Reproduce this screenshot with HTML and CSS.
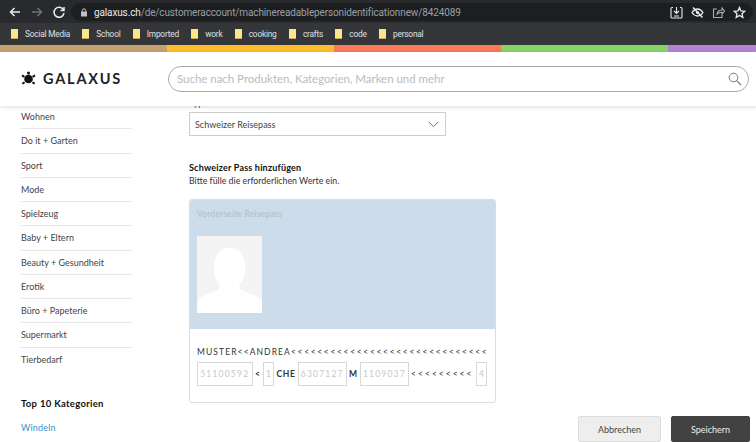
FILE: index.html
```html
<!DOCTYPE html>
<html lang="de">
<head>
    <meta charset="UTF-8">
    <title>Galaxus</title>
    <link rel="stylesheet" href="styles.css">
</head>
<body>
    <!-- Browser -->
    <div class="toolbar">
        <div class="navIcons">
            <svg width="14" height="14" viewBox="0 0 14 14"><path d="M12 7H2.500M6.500 3 2.500 7l4 4" class="nav"/></svg>
            <svg width="14" height="14" viewBox="0 0 14 14"><path d="M2 7h9.500M7.500 3l4 4-4 4" class="nav dim"/></svg>
            <svg width="14" height="14" viewBox="0 0 14 14"><path d="M11.500 5A5 5 0 1 0 12 8M12 2v3.500H8.500" class="nav"/></svg>
        </div>
        <div class="omnibox">
            <svg class="lock" width="8" height="9" viewBox="0 0 8 9"><rect x="1" y="3.500" width="6" height="5" fill="#bdc1c6"/><path d="M2.300 4V2.500a1.700 1.700 0 0 1 3.400 0V4" fill="none" stroke="#bdc1c6"/></svg>
            <span class="url"><b>galaxus.ch</b>/de/customeraccount/machinereadablepersonidentificationnew/8424089</span>
            <div class="omniIcons">
                <svg width="13" height="13" viewBox="0 0 13 13"><path d="M3 1.500H2a1 1 0 0 0-1 1V11a1 1 0 0 0 1 1h9a1 1 0 0 0 1-1V2.500a1 1 0 0 0-1-1h-1M6.500 1v6M4 5l2.500 2.500L9 5M4 10h5" fill="none" stroke="#e8eaed" stroke-width="1.100"/></svg>
                <svg width="13" height="13" viewBox="0 0 13 13"><path d="M1 6.500C3 3.500 5 3 6.500 3S10 3.500 12 6.500C10 9.500 8 10 6.500 10S3 9.500 1 6.500Z" fill="none" stroke="#e8eaed" stroke-width="1.300"/><circle cx="6.500" cy="6.500" r="1.600" fill="#e8eaed"/><path d="M2 1.500l9.500 10" stroke="#e8eaed" stroke-width="1.500"/></svg>
                <svg width="13" height="13" viewBox="0 0 13 13"><path d="M5 3H1.500v8.500H10V8M5 8c.5-2.500 2.500-4 5-4V2l2.500 3L10 8V6.300C8 6.300 6.300 6.700 5 8Z" fill="none" stroke="#a9adb1" stroke-width="1.100"/></svg>
                <svg width="13" height="13" viewBox="0 0 13 13"><path d="M6.500 1.500 8 5l3.700.3L9 7.700l.8 3.700-3.300-2-3.300 2 .8-3.700L1.300 5.300 5 5Z" fill="none" stroke="#e8eaed" stroke-width="1.300"/></svg>
            </div>
        </div>
    </div>
    <div class="bookmarks">
        <span class="bookmark">Social Media</span>
        <span class="bookmark">School</span>
        <span class="bookmark">Imported</span>
        <span class="bookmark">work</span>
        <span class="bookmark">cooking</span>
        <span class="bookmark">crafts</span>
        <span class="bookmark">code</span>
        <span class="bookmark">personal</span>
    </div>

    <!-- Seite -->
    <div class="rainbow">
        <i class="tan"></i><i class="yellow"></i><i class="coral"></i><i class="green"></i><i class="purple"></i>
    </div>
    <header class="siteHeader">
        <div class="logo">
            <svg width="15" height="15" viewBox="0 0 15 15">
                <circle cx="7.500" cy="8" r="4.300" fill="#111"/>
                <circle cx="7.500" cy="1.900" r="1.500" fill="#111"/>
                <path d="M1 4.300 3.400 5.800M14 4.300 11.600 5.800M1.300 12.800l2.300-1.600M13.700 12.800l-2.300-1.600" stroke="#111" stroke-width="2"/>
            </svg>
            <span>GALAXUS</span>
        </div>
        <div class="search">
            <span>Suche nach Produkten, Kategorien, Marken und mehr</span>
            <svg width="14" height="14" viewBox="0 0 14 14"><circle cx="5.500" cy="5.500" r="4.300" fill="none" stroke="#777"/><path d="M8.700 8.700 13 13" stroke="#777" stroke-width="1.200"/></svg>
        </div>
    </header>

    <div class="page">
        <nav class="sidebar">
            <ul class="catList">
                <li>Wohnen</li>
                <li>Do it + Garten</li>
                <li>Sport</li>
                <li>Mode</li>
                <li>Spielzeug</li>
                <li>Baby + Eltern</li>
                <li>Beauty + Gesundheit</li>
                <li>Erotik</li>
                <li>Büro + Papeterie</li>
                <li>Supermarkt</li>
                <li>Tierbedarf</li>
            </ul>
            <h4>Top 10 Kategorien</h4>
            <a class="topLink" href="#">Windeln</a>
        </nav>

        <main class="content">
            <label class="typeLabel">Typ</label>
            <div class="selectBox">
                <span>Schweizer Reisepass</span>
                <svg width="11" height="7" viewBox="0 0 11 7"><path d="M.7.800 5.500 5.600 10.300.800" fill="none" stroke="#777" stroke-width="1"/></svg>
            </div>
            <h3>Schweizer Pass hinzufügen</h3>
            <p class="hint">Bitte fülle die erforderlichen Werte ein.</p>

            <div class="passCard">
                <div class="passTop">
                    <div class="passLabel">Vorderseite Reisepass</div>
                    <div class="photo">
                        <svg width="65" height="77" viewBox="0 0 65 77"><path d="M0 77V66c2-5 8-7 14-9l7-3c2-2 2-4 1-7-3-3-5-8-5-12-1-15 6-23 15.500-23S49 20 48 35c0 4-2 9-5 12-1 3-1 5 1 7l7 3c6 2 12 4 14 9v11Z" fill="#fff"/></svg>
                    </div>
                </div>
                <div class="passBottom">
                    <div class="mrzName">MUSTER&lt;&lt;ANDREA<span class="mrzFill">&lt;&lt;&lt;&lt;&lt;&lt;&lt;&lt;&lt;&lt;&lt;&lt;&lt;&lt;&lt;&lt;&lt;&lt;&lt;&lt;&lt;&lt;&lt;&lt;&lt;&lt;&lt;&lt;&lt;&lt;</span></div>
                    <div class="mrzRow">
                        <span class="field f8">51100592</span>
                        <span class="mrzText">&lt;</span>
                        <span class="field f1">1</span>
                        <span class="mrzText">CHE</span>
                        <span class="field f7">6307127</span>
                        <span class="mrzText">M</span>
                        <span class="field f7">1109037</span>
                        <span class="mrzText fill">&lt;&lt;&lt;&lt;&lt;&lt;&lt;&lt;&lt;</span>
                        <span class="field f1">4</span>
                    </div>
                </div>
            </div>
        </main>

        <div class="actions">
            <button class="btn">Abbrechen</button>
            <button class="btn primary">Speichern</button>
        </div>
    </div>
</body>
</html>
```

FILE: styles.css
```css
/* Allgemein */
html, body {
    margin: 0;
    height: 442px;
    overflow: hidden;
}

body {
    font-family: Lato, "Open Sans", Arial, sans-serif;
    background-color: #fff;
    color: #333;
}

/* Browser */
.toolbar {
    display: flex;
    align-items: center;
    height: 22px;
    padding-top: 1px;
    background-color: #292a2d;
}

.navIcons {
    display: flex;
    gap: 8px;
    margin-left: 8px;
    width: 63px;
}

.nav {
    fill: none;
    stroke: #e8eaed;
    stroke-width: 1.500;
}

.nav.dim {
    stroke: #6f7276;
}

.omnibox {
    display: flex;
    align-items: center;
    flex: 1;
    height: 18px;
    margin-right: 3px;
    padding: 0 7px 0 9px;
    background-color: #1d1e20;
    border-radius: 9px;
}

.lock {
    margin-right: 6px;
}

.url {
    font-family: Roboto, Arial, sans-serif;
    font-size: 10px;
    letter-spacing: -0.130px;
    color: #9aa0a6;
    white-space: nowrap;
}

.url b {
    font-weight: 400;
    color: #e8eaed;
}

.omniIcons {
    display: flex;
    gap: 8px;
    margin-left: auto;
}

.bookmarks {
    display: flex;
    align-items: center;
    gap: 12.300px;
    height: 21px;
    padding: 0 0 1px 11px;
    background-color: #35363a;
}

.bookmark {
    display: flex;
    align-items: center;
    gap: 7px;
    font-family: Roboto, Arial, sans-serif;
    font-size: 8.300px;
    letter-spacing: -0.200px;
    color: #dfe1e5;
}

.bookmark::before {
    content: "";
    width: 7px;
    height: 9px;
    background-color: #fbe58d;
    border-bottom: 1px solid #c9a84a;
}

/* Farbstreifen */
.rainbow {
    display: flex;
    height: 7px;
}

.rainbow i {
    flex: 0 0 167px;
}

.tan { background-color: #c4a173; }
.yellow { background-color: #ffbe29; }
.coral { background-color: #fa7a59; }
.green { background-color: #87d364; }
.rainbow .purple { flex: 1; background-color: #b283d3; }

/* Kopfzeile */
.siteHeader {
    display: flex;
    align-items: center;
    position: relative;
    z-index: 1;
    height: 54px;
    box-sizing: border-box;
    padding-bottom: 1px;
    background-color: #fff;
    box-shadow: 0 1px 4px rgba(0, 0, 0, 0.15);
}

.logo {
    display: flex;
    align-items: center;
    gap: 7px;
    width: 168px;
    box-sizing: border-box;
    padding-left: 21px;
}

.logo span {
    font-size: 14.500px;
    font-weight: 700;
    letter-spacing: 1.800px;
    color: #222;
}

.search {
    display: flex;
    align-items: center;
    justify-content: space-between;
    box-sizing: border-box;
    width: 581px;
    height: 26px;
    padding: 0 6px 0 8px;
    border: 1px solid #aaa;
    border-radius: 13px;
    font-size: 11.500px;
    letter-spacing: -0.030px;
    color: #bbb;
}

/* Inhalt */
.page {
    display: flex;
    position: relative;
    height: 337px;
}

.sidebar {
    width: 111px;
    margin-left: 21px;
    flex-shrink: 0;
}

.catList {
    list-style: none;
    margin: -1px 0 0;
    padding: 0;
}

.catList li {
    display: flex;
    align-items: center;
    height: 23.250px;
    border-bottom: 1px solid #e8e8e8;
    font-size: 9px;
    color: #444;
}

.catList li:last-child {
    border-bottom: none;
}

.sidebar h4 {
    margin: 27px 0 0;
    font-size: 9.500px;
    font-weight: 700;
    letter-spacing: 0.300px;
    color: #111;
}

.topLink {
    display: block;
    margin-top: 13px;
    font-size: 9px;
    letter-spacing: 0.200px;
    color: #3d8fd1;
    text-decoration: none;
}

.content {
    width: 307px;
    margin-left: 57px;
}

.typeLabel {
    display: block;
    height: 11px;
    margin: -9px 0 0;
    font-size: 9px;
    line-height: 11px;
    color: #444;
}

.selectBox {
    display: flex;
    align-items: center;
    justify-content: space-between;
    box-sizing: border-box;
    width: 257px;
    height: 24px;
    margin-top: 4px;
    padding: 0 6px 0 5px;
    border: 1px solid #ccc;
    font-size: 9px;
    color: #444;
}

.content h3 {
    margin: 26px 0 0;
    font-size: 9px;
    font-weight: 700;
    letter-spacing: 0.200px;
    color: #111;
}

.hint {
    margin: 2px 0 0;
    font-size: 8.800px;
    color: #333;
}

/* Pass */
.passCard {
    box-sizing: border-box;
    width: 307px;
    height: 204px;
    margin-top: 13px;
    border: 1px solid #ddd;
    border-radius: 3px;
    overflow: hidden;
}

.passTop {
    height: 129px;
    box-sizing: border-box;
    padding: 9px 7px 0;
    background-color: #ccdceb;
}

.passLabel {
    font-size: 8.500px;
    letter-spacing: 0.200px;
    color: #b4bcc4;
}

.photo {
    display: flex;
    align-items: flex-end;
    width: 65px;
    height: 77px;
    margin-top: 17px;
    background-color: #f4f4f4;
}

.passBottom {
    padding: 18px 8px 0 7px;
}

.mrzName {
    font-size: 8.500px;
    letter-spacing: 1.100px;
    color: #333;
    white-space: nowrap;
    overflow: hidden;
}

.mrzFill {
    letter-spacing: 1.650px;
}

.mrzRow {
    display: flex;
    align-items: center;
    justify-content: space-between;
    margin-top: 5px;
}

.field {
    display: block;
    box-sizing: border-box;
    height: 24px;
    line-height: 22px;
    border: 1px solid #d8d8d8;
    font-size: 8.500px;
    letter-spacing: 1.200px;
    text-align: center;
    color: #c8c8c8;
}

.f8 { width: 55.500px; }
.f7 { width: 48.500px; }
.f1 { width: 11px; letter-spacing: 0; }

.mrzText {
    font-size: 8.500px;
    font-weight: 700;
    letter-spacing: 0.700px;
    color: #333;
}

.mrzText.fill {
    font-weight: 400;
    letter-spacing: 2px;
}

/* Aktionen */
.actions {
    display: flex;
    gap: 10px;
    position: absolute;
    right: 6px;
    bottom: 1px;
}

.btn {
    width: 83px;
    height: 26px;
    border: 1px solid #ddd;
    border-radius: 2px;
    background-color: #eee;
    font-family: Lato, Arial, sans-serif;
    font-size: 9px;
    color: #444;
}

.btn.primary {
    width: 79px;
    border-color: #3f3f3f;
    background-color: #424242;
    color: #eee;
}
```
